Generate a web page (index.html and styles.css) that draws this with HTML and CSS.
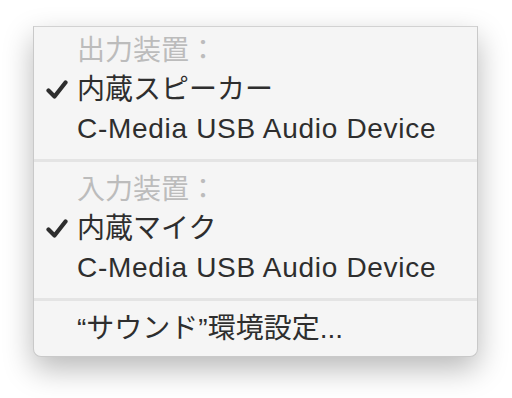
FILE: index.html
```html
<!DOCTYPE html>
<html lang="ja">
<head>
<meta charset="utf-8">
<link rel="stylesheet" href="styles.css">
</head>
<body>
<div class="menu">
  <div class="group">
    <div class="item header">出力装置：</div>
    <div class="item"><svg class="check" viewBox="0 0 22 19"><polyline points="2.5,10.5 8.5,16.5 19.5,2.5"/></svg>内蔵スピーカー</div>
    <div class="item"><span class="latin">C-Media USB Audio Device</span></div>
  </div>
  <div class="sep"></div>
  <div class="group">
    <div class="item header">入力装置：</div>
    <div class="item"><svg class="check" viewBox="0 0 22 19"><polyline points="2.5,10.5 8.5,16.5 19.5,2.5"/></svg>内蔵マイク</div>
    <div class="item"><span class="latin">C-Media USB Audio Device</span></div>
  </div>
  <div class="sep"></div>
  <div class="group">
    <div class="item">“サウンド”環境設定...</div>
  </div>
</div>
</body>
</html>
```
FILE: styles.css
```css
html, body {
  margin: 0;
  padding: 0;
  background: #ffffff;
}
body {
  font-family: "Liberation Sans", "Noto Sans CJK JP", sans-serif;
  min-height: 398px;
  padding-top: 26px;
  box-sizing: border-box;
}
.menu {
  margin-left: 33px;
  width: 443px;
  background: #f5f5f5;
  border: 1px solid #c9c9c9;
  border-top-color: #d2d2d2;
  border-radius: 0 0 8px 8px;
  box-shadow: 0 12px 30px rgba(0, 0, 0, 0.28);
  padding: 4px 0 8px;
}
.item {
  position: relative;
  height: 39px;
  line-height: 39px;
  padding-left: 43px;
  font-size: 28px;
  color: #2e2e2e;
  white-space: nowrap;
}
.latin {
  letter-spacing: 0.7px;
}
.header {
  color: #bcbcbc;
}
.sep {
  height: 3px;
  background: #e4e4e4;
  margin: 11px 0 8px;
}
.check {
  position: absolute;
  left: 12px;
  top: 10px;
  width: 22px;
  height: 19px;
  fill: none;
  stroke: #2e2e2e;
  stroke-width: 4.2;
  stroke-linecap: round;
  stroke-linejoin: round;
}
```
